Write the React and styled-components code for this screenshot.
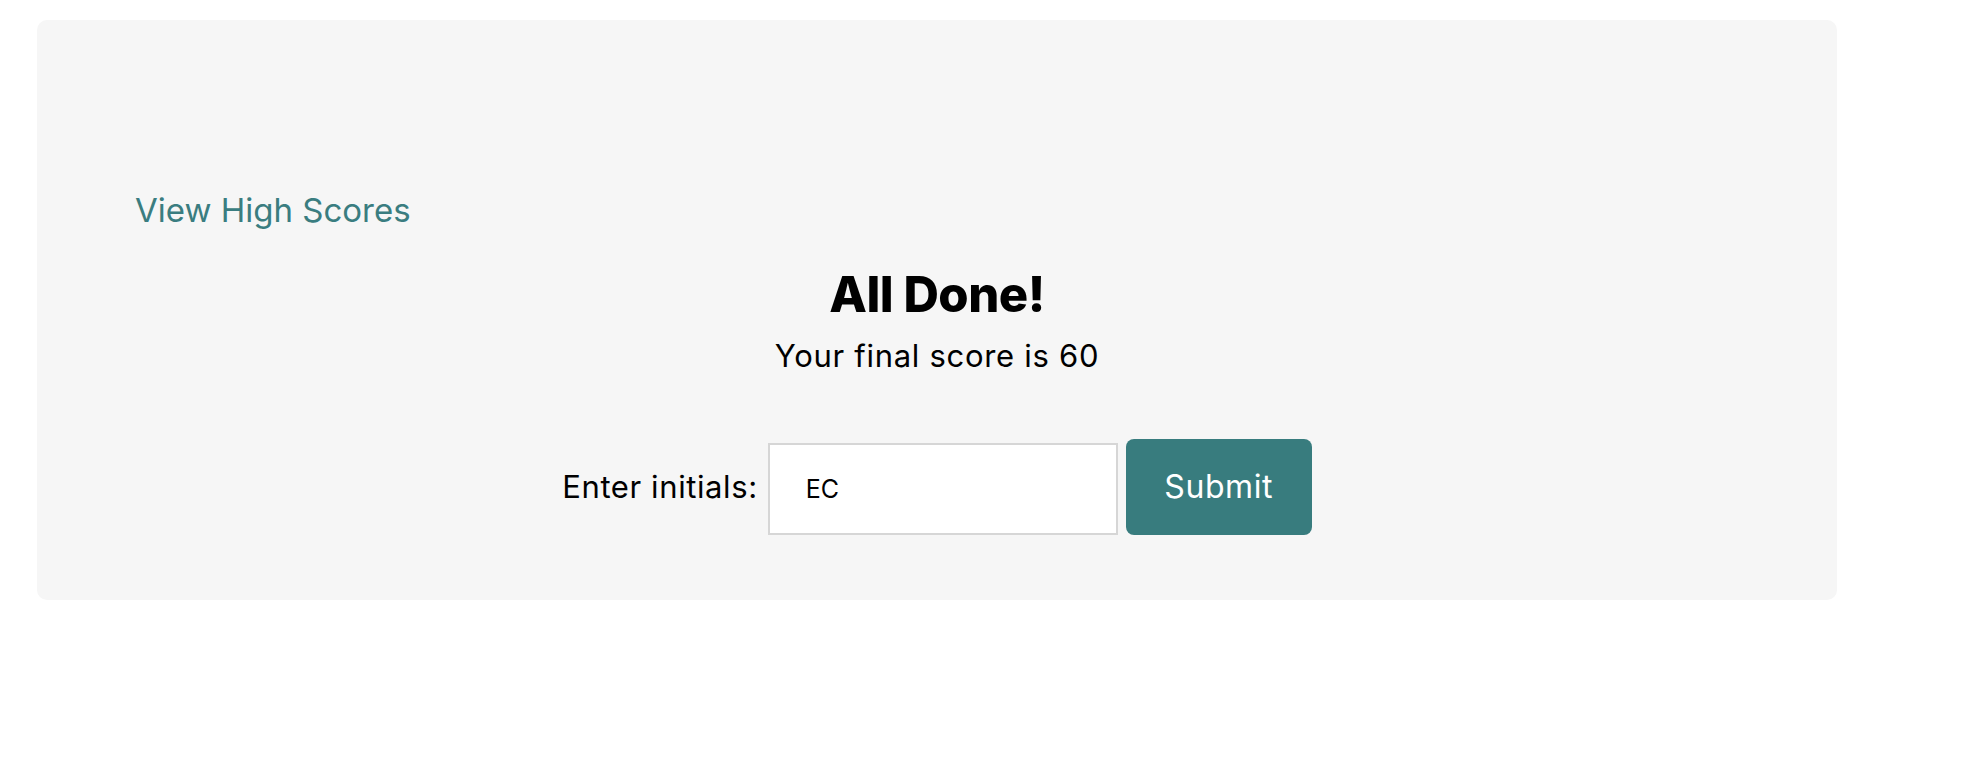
import React from "react";
import styled, { createGlobalStyle } from "styled-components";

const GlobalStyle = createGlobalStyle`
    body {
        margin: 0;
        background: #ffffff;
        font-family: Inter, "Noto Sans", sans-serif;
        color: #000;
    }
`;

const Card = styled.div`
    width: 1800px;
    height: 580px;
    box-sizing: border-box;
    margin: 20px 0 0 37px;
    padding: 171px 98px 0;
    background-color: #f6f6f6;
    border-radius: 10px;
    display: flex;
    flex-direction: column;
`;

const HighScores = styled.a`
    align-self: flex-start;
    font-size: 33px;
    line-height: 1.2;
    color: #3a7d80;
    text-decoration: none;
    cursor: pointer;
`;

const Title = styled.h1`
    margin: 35px 0 0;
    text-align: center;
    font-size: 49px;
    font-weight: 800;
    letter-spacing: -0.5px;
    line-height: 1.2;
`;

const Score = styled.p`
    margin: 13px 0 0;
    text-align: center;
    font-size: 31px;
    letter-spacing: 0.7px;
    line-height: 1.2;
`;

const Form = styled.form`
    margin-top: 64px;
    display: flex;
    justify-content: center;
    align-items: flex-end;
`;

const Label = styled.label`
    align-self: center;
    margin-right: 10px;
    font-size: 31px;
    letter-spacing: 0.6px;
`;

const Input = styled.input`
    width: 350px;
    height: 92px;
    box-sizing: border-box;
    padding: 0 0 0 36px;
    border: 2px solid #d6d6d6;
    background: #fff;
    font-family: inherit;
    font-size: 25px;
    color: #000;
    outline: none;
`;

const Submit = styled.button`
    width: 186px;
    height: 96px;
    margin-left: 8px;
    border: none;
    border-radius: 8px;
    background-color: #387c7e;
    color: #fff;
    font-family: inherit;
    font-size: 32px;
    letter-spacing: 0.6px;
    cursor: pointer;
`;

const App = () => {
    const [initials, set_initials] = React.useState("EC");

    return (
        <>
            <GlobalStyle />
            <Card>
                <HighScores>View High Scores</HighScores>
                <Title>All Done!</Title>
                <Score>Your final score is 60</Score>
                <Form onSubmit={(e) => e.preventDefault()}>
                    <Label htmlFor="initials">Enter initials:</Label>
                    <Input id="initials" type="text" value={initials} onChange={(e) => set_initials(e.target.value)} />
                    <Submit type="submit">Submit</Submit>
                </Form>
            </Card>
        </>
    );
};

export default App;
